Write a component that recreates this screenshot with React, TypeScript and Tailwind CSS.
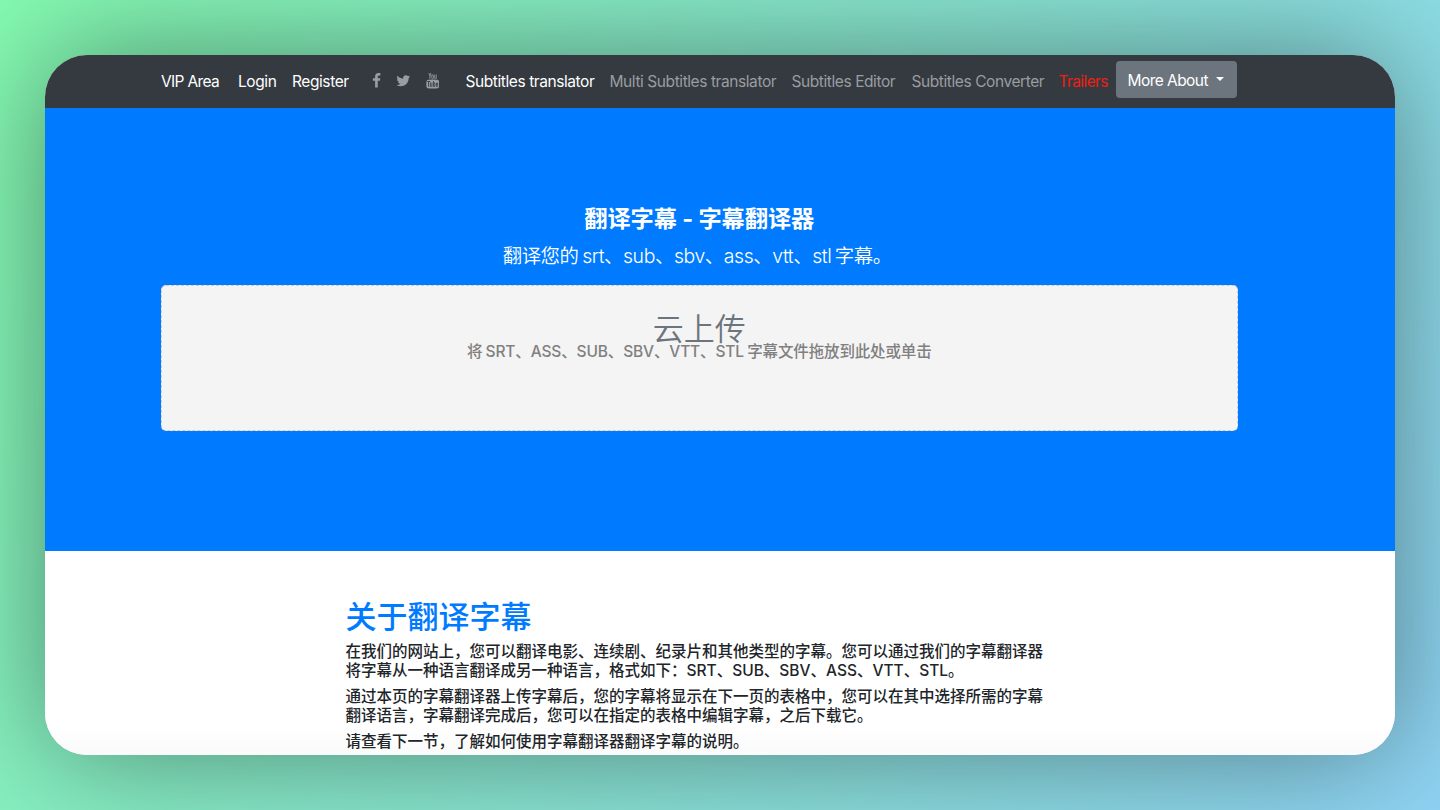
const icons = [
  {
    name: 'facebook',
    viewBox: '0 0 1024 1792',
    className: 'w-[9px] ml-[23px]',
    path: 'M959 12v264h-157q-86 0-116 36t-30 108v189h293l-39 296h-254v759h-306v-759h-255v-296h255v-218q0-186 104-288.5t277-102.5q147 0 228 12z',
  },
  {
    name: 'twitter',
    viewBox: '0 0 1664 1792',
    className: 'w-[14.5px] ml-[15px]',
    path: 'M1620 408q-67 98-162 167 1 14 1 42 0 130-38 259.5t-115.5 248.5-184.5 210.5-258 146-323 54.5q-271 0-496-145 35 4 78 4 225 0 401-138-105-2-188-64.5t-114-159.5q33 5 61 5 43 0 85-11-112-23-185.5-111.5t-73.5-205.5v-4q68 38 146 41-66-44-105-115t-39-154q0-88 44-163 121 149 294.5 238.5t371.5 99.5q-8-38-8-74 0-134 94.5-228.5t228.5-94.5q140 0 236 102 109-21 205-78-37 115-142 178 93-10 186-50z',
  },
  {
    name: 'youtube',
    viewBox: '0 0 1536 1792',
    className: 'w-[13.5px] ml-[15px]',
    path: 'M971 1244v211q0 67-39 67-23 0-45-22v-301q22-22 45-22 39 0 39 67zm338 1v46h-90v-46q0-68 45-68t45 68zm-966-218h107v-94h-312v94h105v569h100v-569zm288 569h89v-494h-89v378q-30 42-57 42-18 0-21-21-1-3-1-35v-364h-89v391q0 49 8 73 12 37 58 37 48 0 102-61v54zm429-148v-197q0-73-9-99-17-56-71-56-50 0-93 54v-217h-89v663h89v-48q45 55 93 55 54 0 71-55 9-27 9-100zm338-10v-13h-91q0 51-2 61-7 36-40 36-46 0-46-69v-87h179v-103q0-79-27-116-39-51-106-51-68 0-107 51-28 37-28 116v173q0 79 29 116 39 51 108 51 72 0 108-53 18-27 21-54 2-9 2-58zm-608-913v-210q0-69-43-69t-43 69v210q0 70 43 70t43-70zm719 751q0 234-26 350-14 59-58 99t-102 46q-184 21-555 21t-555-21q-58-6-102.5-46t-57.5-99q-26-112-26-350 0-234 26-350 14-59 58-99t103-47q183-20 554-20t555 20q58 7 102.5 47t57.5 99q26 112 26 350zm-998-1276h102l-121 399v271h-100v-271q-14-74-61-212-37-103-65-187h106l71 263zm370 333v175q0 81-28 118-38 51-106 51-67 0-105-51-28-38-28-118v-175q0-80 28-117 38-51 105-51 68 0 106 51 28 37 28 117zm335-162v499h-91v-55q-53 62-103 62-46 0-59-37-8-24-8-75v-394h91v367q0 33 1 35 3 22 21 22 27 0 57-43v-381h91z',
  },
];

const accountLinks = [
  { label: 'VIP Area', className: 'w-[77px] tracking-[-0.65px]' },
  { label: 'Login', className: 'w-[54px]' },
  { label: 'Register', className: 'w-[57px]' },
];

const navLinks = [
  { label: 'Subtitles translator', className: 'w-[144px] text-white' },
  { label: 'Multi Subtitles translator', className: 'w-[182px] text-[#9a9da0]' },
  { label: 'Subtitles Editor', className: 'w-[120px] text-[#9a9da0]' },
  { label: 'Subtitles Converter', className: 'w-[147px] text-[#9a9da0]' },
  { label: 'Trailers', className: 'w-[57px] text-[#ee2015] tracking-[-0.6px]' },
];

const paragraphs = [
  ['在我们的网站上，您可以翻译电影、连续剧、纪录片和其他类型的字幕。您可以通过我们的字幕翻译器', '将字幕从一种语言翻译成另一种语言，格式如下：SRT、SUB、SBV、ASS、VTT、STL。'],
  ['通过本页的字幕翻译器上传字幕后，您的字幕将显示在下一页的表格中，您可以在其中选择所需的字幕', '翻译语言，字幕翻译完成后，您可以在指定的表格中编辑字幕，之后下载它。'],
  ['请查看下一节，了解如何使用字幕翻译器翻译字幕的说明。'],
];

function Navbar() {
  return (
    <nav className="h-[52.5px] bg-[#343a40] pl-[116px] flex items-center text-[15.5px] tracking-[-0.42px] whitespace-nowrap">
      {accountLinks.map((link) => (
        <a key={link.label} className={`text-white shrink-0 ${link.className}`}>
          {link.label}
        </a>
      ))}
      {icons.map((icon) => (
        <svg key={icon.name} viewBox={icon.viewBox} className={`h-[15.5px] -mt-px shrink-0 fill-[#9a9da0] ${icon.className}`}>
          <path d={icon.path} />
        </svg>
      ))}
      <div className="flex items-center ml-[26.5px]">
        {navLinks.map((link) => (
          <a key={link.label} className={`shrink-0 ${link.className}`}>
            {link.label}
          </a>
        ))}
        <button className="w-[121.5px] h-[37px] -mt-[3px] bg-[#6c757d] text-white rounded-[4px] flex items-center pl-3">
          <span className="w-[88px] pt-px text-left tracking-[-0.55px]">More About</span>
          <span className="border-x-[4.5px] border-x-transparent border-t-[4.5px] border-t-white -mt-[2px]" />
        </button>
      </div>
    </nav>
  );
}

export default function App() {
  return (
    <div className="h-[810px] overflow-hidden bg-[linear-gradient(120deg,#84fab0_0%,#8fd3f4_100%)] px-[45px] pt-[55px] font-['Inter','Noto_Sans_CJK_SC',sans-serif]">
      <div className="h-[699.5px] rounded-[42px] overflow-hidden bg-white shadow-[0_0_120px_rgba(0,0,0,0.43)]">
        <Navbar />

        <section className="h-[443px] bg-[#007bff] pl-[116px] pr-[157.5px] pt-[97px] text-center text-white">
          <h1 className="text-[23.25px] leading-[28px] font-bold tracking-[-0.1px]">翻译字幕 - 字幕翻译器</h1>
          <p className="mt-[9px] pr-1 text-[19.4px] leading-[29px] font-[350] tracking-[-0.4px] [word-spacing:-1.5px]">翻译您的 srt、sub、sbv、ass、vtt、stl 字幕。</p>
          <div className="mt-[14.5px] h-[145.5px] rounded-[5px] border border-dashed border-[#cccccc] bg-[#f4f4f4] pt-[25px]">
            <div className="text-[31px] leading-[36px] font-[350] text-[#6c757d]">云上传</div>
            <div className="-mt-[5px] text-[15.5px] leading-[19px] font-medium text-[#808080] tracking-[-0.14px] [word-spacing:-0.7px]">将 SRT、ASS、SUB、SBV、VTT、STL 字幕文件拖放到此处或单击</div>
          </div>
        </section>

        <section className="h-[204px] pl-[300.5px] pt-[47px] bg-[linear-gradient(to_bottom,#ffffff_85%,#fafafa_100%)]">
          <h2 className="text-[31px] leading-[37px] font-medium text-[#007bff]">关于翻译字幕</h2>
          <div className="mt-[7.5px] flex flex-col gap-[7px] text-[15.5px] leading-[19px] font-medium text-[#212529] whitespace-nowrap">
            {paragraphs.map((lines) => (
              <p key={lines[0]}>
                {lines.map((line) => (
                  <span key={line} className="block">{line}</span>
                ))}
              </p>
            ))}
          </div>
        </section>
      </div>
    </div>
  );
}
